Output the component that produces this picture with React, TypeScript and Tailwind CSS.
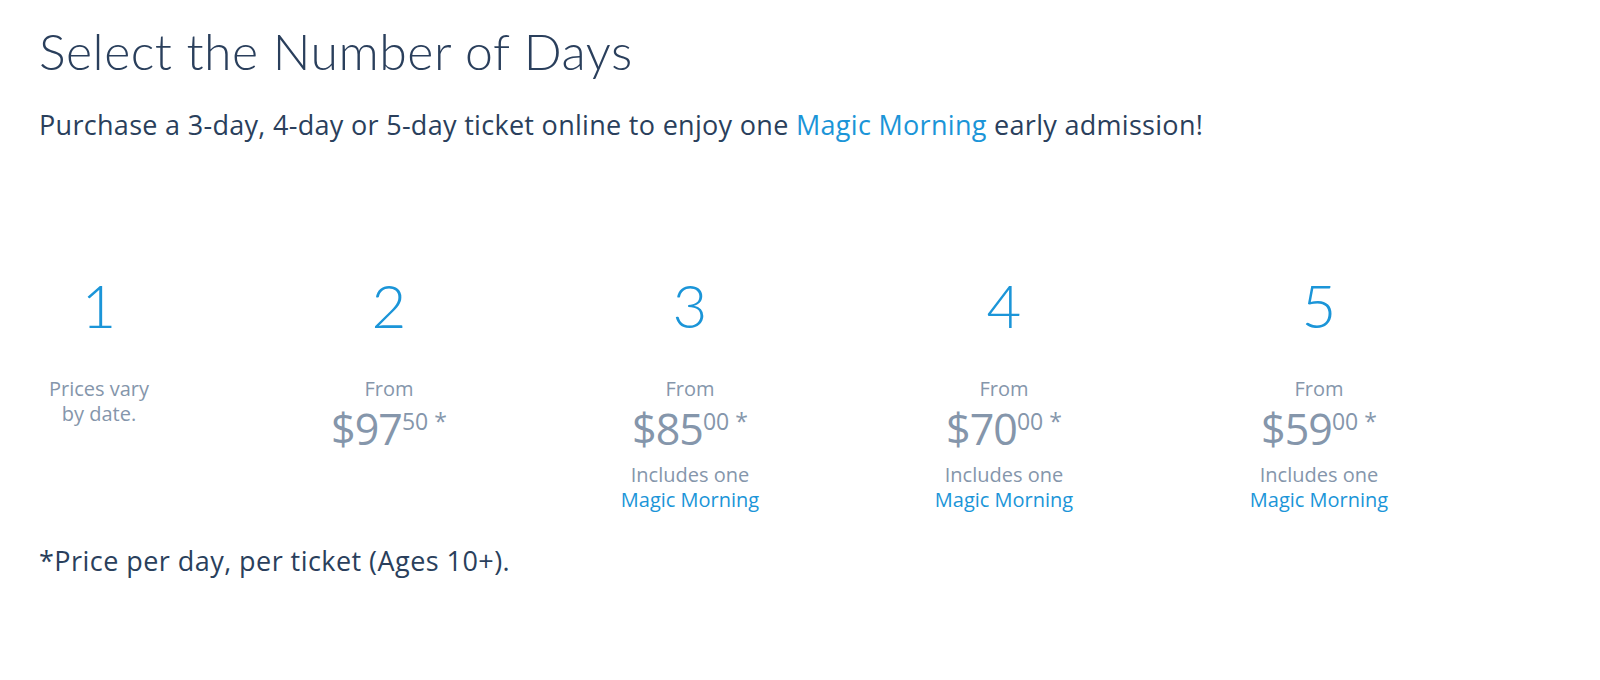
type Day = {
  n: number;
  whole?: string;
  cents?: string;
  magic?: boolean;
  offset: string;
};

const days: Day[] = [
  { n: 1, offset: "ml-0" },
  { n: 2, whole: "97", cents: "50", offset: "ml-[130px]" },
  { n: 3, whole: "85", cents: "00", magic: true, offset: "ml-[141px]" },
  { n: 4, whole: "70", cents: "00", magic: true, offset: "ml-[154px]" },
  { n: 5, whole: "59", cents: "00", magic: true, offset: "ml-[155px]" },
];

function DayColumn({ d }: { d: Day }) {
  return (
    <div className={`${d.offset} w-[160px] shrink-0 flex flex-col items-center text-center`}>
      <div className="font-['Lato',sans-serif] text-[60px] leading-[60px] font-light text-[#1b95d8]">
        {d.n}
      </div>
      <div className="mt-[41px] text-[20px] leading-[25px] text-[#8596ab]">
        {d.whole ? (
          <>
            <div>From</div>
            <div className="mt-[3px] flex items-start justify-center">
              <span className="text-[43px] leading-[50px] tracking-[-1px]">${d.whole}</span>
              <span className="mt-[4px] text-[23px] leading-[26px]">{d.cents}</span>
              <span className="mt-[4px] ml-[6px] text-[23px] leading-[26px]">*</span>
            </div>
            {d.magic && (
              <div className="mt-[8px]">
                <div>Includes one</div>
                <a className="block text-[#1b95d8]">Magic Morning</a>
              </div>
            )}
          </>
        ) : (
          <>
            <div>Prices vary</div>
            <div>by date.</div>
          </>
        )}
      </div>
    </div>
  );
}

export default function App() {
  return (
    <div className="min-h-screen bg-white font-['Open_Sans',sans-serif] text-[#2a3f5c]">
      <div className="pl-[39px] pt-[26px]">
        <h1 className="font-['Lato',sans-serif] text-[50px] leading-[50px] font-light tracking-[0.5px]">
          Select the Number of Days
        </h1>
        <p className="mt-[35px] text-[27px] leading-[27px] tracking-[0.3px]">
          Purchase a 3-day, 4-day or 5-day ticket online to enjoy one{" "}
          <a className="text-[#1b95d8]">Magic Morning</a> early admission!
        </p>
      </div>

      <div className="mt-[137px] pl-[19px] flex">
        {days.map((d) => (
          <DayColumn key={d.n} d={d} />
        ))}
      </div>

      <p className="mt-[35px] pl-[39px] text-[27px] leading-[27px] tracking-[0.45px]">
        *Price per day, per ticket (Ages 10+).
      </p>
    </div>
  );
}
